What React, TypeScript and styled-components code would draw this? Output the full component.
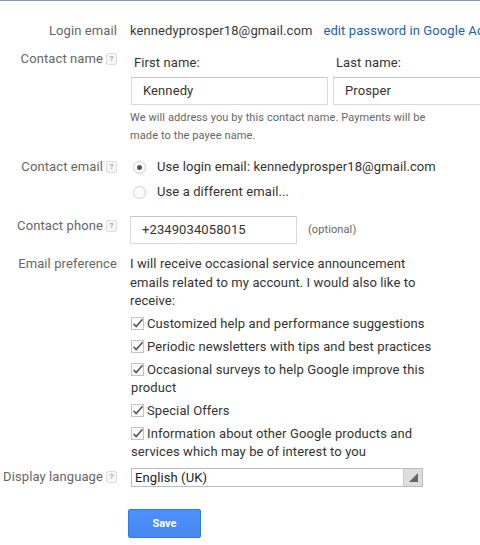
import React from 'react';
import styled, { createGlobalStyle } from 'styled-components';

const GlobalStyle = createGlobalStyle`
  html, body {
    margin: 0;
    padding: 0;
    background: #fff;
    font-family: Roboto, "Liberation Sans", Arial, sans-serif;
    font-size: 13px;
    color: #333;
  }
`;

const Page = styled.div`
  width: 480px;
  height: 545px;
  overflow: hidden;
  border-top: 1px solid #7f98b4;
  box-sizing: border-box;
  padding-top: 21px;
  letter-spacing: 0.1px;
`;

const Row = styled.div<{ $gap?: number }>`
  display: flex;
  align-items: flex-start;
  margin-bottom: ${(p) => p.$gap ?? 10}px;
  white-space: nowrap;
`;

const Label = styled.div<{ $pt?: number }>`
  width: 117px;
  flex: none;
  text-align: right;
  color: #666;
  line-height: 18px;
  padding-top: ${(p) => p.$pt ?? 0}px;
  display: flex;
  justify-content: flex-end;
  align-items: center;
  gap: 3px;
`;

const Help = styled.span`
  display: inline-block;
  width: 9px;
  height: 10px;
  border: 1px solid #ddd;
  border-radius: 2px;
  background: #f6f6f6;
  color: #aaa;
  font-size: 8px;
  line-height: 10px;
  text-align: center;
  font-weight: bold;
`;

const Content = styled.div<{ $pt?: number }>`
  margin-left: 13px;
  flex: 1;
  line-height: 18px;
  padding-top: ${(p) => p.$pt ?? 0}px;
  min-width: 0;
`;

const Value = styled.span`
  color: #3a3a3a;
`;

const Link = styled.a`
  color: #1a5fb4;
  text-decoration: none;
  margin-left: 11px;
`;

const NameGrid = styled.div`
  display: flex;
  gap: 5px;
  margin-left: 1px;
`;

const NameField = styled.div<{ $w: number }>`
  width: ${(p) => p.$w}px;
  flex: none;
`;

const FieldTitle = styled.div`
  padding-left: 3px;
  color: #333;
  margin-bottom: 5px;
`;

const TextBox = styled.div<{ $w: number; $h?: number }>`
  width: ${(p) => p.$w}px;
  height: ${(p) => p.$h ?? 28}px;
  box-sizing: border-box;
  border: 1px solid #d9d9d9;
  border-top-color: #c6c6c6;
  padding: 0 11px;
  display: flex;
  align-items: center;
  color: #333;
  background: #fff;
`;

const Hint = styled.div`
  font-size: 11px;
  line-height: 18px;
  color: #666;
  white-space: normal;
  width: 300px;
  margin-top: 4px;
`;

const RadioItem = styled.div`
  display: flex;
  align-items: center;
  height: 18px;
  margin-bottom: 7px;
  padding-left: 3px;
`;

const Radio = styled.span<{ $on?: boolean }>`
  width: 13px;
  height: 13px;
  border-radius: 50%;
  border: 1px solid #d0d0d0;
  box-sizing: border-box;
  background: #fbfbfb;
  margin-right: 11px;
  display: flex;
  align-items: center;
  justify-content: center;
  &::after {
    content: '';
    width: 5px;
    height: 5px;
    border-radius: 50%;
    background: ${(p) => (p.$on ? '#555' : 'transparent')};
  }
`;

const PhoneLine = styled.div`
  display: flex;
  align-items: center;
`;

const Optional = styled.span`
  font-size: 11px;
  color: #666;
  margin-left: 11px;
`;

const Para = styled.div`
  white-space: normal;
  width: 305px;
  line-height: 18.5px;
  margin-bottom: 4px;
`;

const CheckItem = styled.div`
  display: flex;
  align-items: flex-start;
  white-space: normal;
  width: 308px;
  margin-bottom: 5px;
  margin-left: 1px;
`;

const CheckText = styled.span`
  text-indent: 0;
`;

const Box = styled.span`
  width: 14px;
  display: inline-flex;
  vertical-align: -2px;
  margin-right: 2px;
`;

const Select = styled.div`
  width: 292px;
  height: 19px;
  margin-left: 1px;
  box-sizing: border-box;
  border: 1px solid #bbb;
  display: flex;
  align-items: center;
  color: #222;
  font-size: 13px;
`;

const SelectText = styled.span`
  flex: 1;
  padding-left: 3px;
  line-height: 17px;
`;

const Arrow = styled.span`
  width: 18px;
  height: 17px;
  background: #dedede;
  border-left: 1px solid #ccc;
  position: relative;
  &::after {
    content: '';
    position: absolute;
    right: 4px;
    bottom: 4px;
    border-style: solid;
    border-width: 0 0 9px 9px;
    border-color: transparent transparent #666 transparent;
  }
`;

const SaveButton = styled.button`
  margin-left: 128px;
  width: 73px;
  height: 29px;
  border: 1px solid #3079ed;
  border-radius: 2px;
  background: linear-gradient(#4d90fe, #4787ed);
  color: #fff;
  font-family: Roboto, "Liberation Sans", Arial, sans-serif;
  font-weight: bold;
  font-size: 11px;
  cursor: pointer;
`;

const Check = () => (
  <Box>
    <svg width="13" height="13" viewBox="0 0 13 13">
      <rect x="0.5" y="0.5" width="12" height="12" fill="#fff" stroke="#c4c4c4" />
      <path d="M2.5 6.8 L5.2 9.6 L11.5 2.2" fill="none" stroke="#555" strokeWidth="1.6" />
    </svg>
  </Box>
);

const prefs = [
  'Customized help and performance suggestions',
  'Periodic newsletters with tips and best practices',
  'Occasional surveys to help Google improve this product',
  'Special Offers',
  'Information about other Google products and services which may be of interest to you',
];

export default function App() {
  return (
    <>
      <GlobalStyle />
      <Page>
        <Row $gap={10}>
          <Label>Login email</Label>
          <Content>
            <Value>kennedyprosper18@gmail.com</Value>
            <Link href="#">edit password in Google Accounts</Link>
          </Content>
        </Row>

        <Row $gap={13}>
          <Label>
            Contact name <Help>?</Help>
          </Label>
          <Content $pt={4}>
            <NameGrid>
              <NameField $w={197}>
                <FieldTitle>First name:</FieldTitle>
                <TextBox $w={197}>Kennedy</TextBox>
              </NameField>
              <NameField $w={160}>
                <FieldTitle>Last name:</FieldTitle>
                <TextBox $w={160}>Prosper</TextBox>
              </NameField>
            </NameGrid>
            <Hint>
              We will address you by this contact name. Payments will be made to the payee name.
            </Hint>
          </Content>
        </Row>

        <Row $gap={8}>
          <Label>
            Contact email <Help>?</Help>
          </Label>
          <Content>
            <RadioItem>
              <Radio $on />
              Use login email: kennedyprosper18@gmail.com
            </RadioItem>
            <RadioItem>
              <Radio />
              Use a different email...
            </RadioItem>
          </Content>
        </Row>

        <Row $gap={11}>
          <Label $pt={1}>
            Contact phone <Help>?</Help>
          </Label>
          <Content>
            <PhoneLine>
              <TextBox $w={167} $h={28}>+2349034058015</TextBox>
              <Optional>(optional)</Optional>
            </PhoneLine>
          </Content>
        </Row>

        <Row $gap={2}>
          <Label>Email preference</Label>
          <Content>
            <Para>
              I will receive occasional service announcement emails related to my account. I would
              also like to receive:
            </Para>
            {prefs.map((p) => (
              <CheckItem key={p}>
                <CheckText>
                  <Check />
                  {p}
                </CheckText>
              </CheckItem>
            ))}
          </Content>
        </Row>

        <Row $gap={22}>
          <Label>
            Display language <Help>?</Help>
          </Label>
          <Content $pt={0}>
            <Select>
              <SelectText>English (UK)</SelectText>
              <Arrow />
            </Select>
          </Content>
        </Row>

        <SaveButton>Save</SaveButton>
      </Page>
    </>
  );
}
